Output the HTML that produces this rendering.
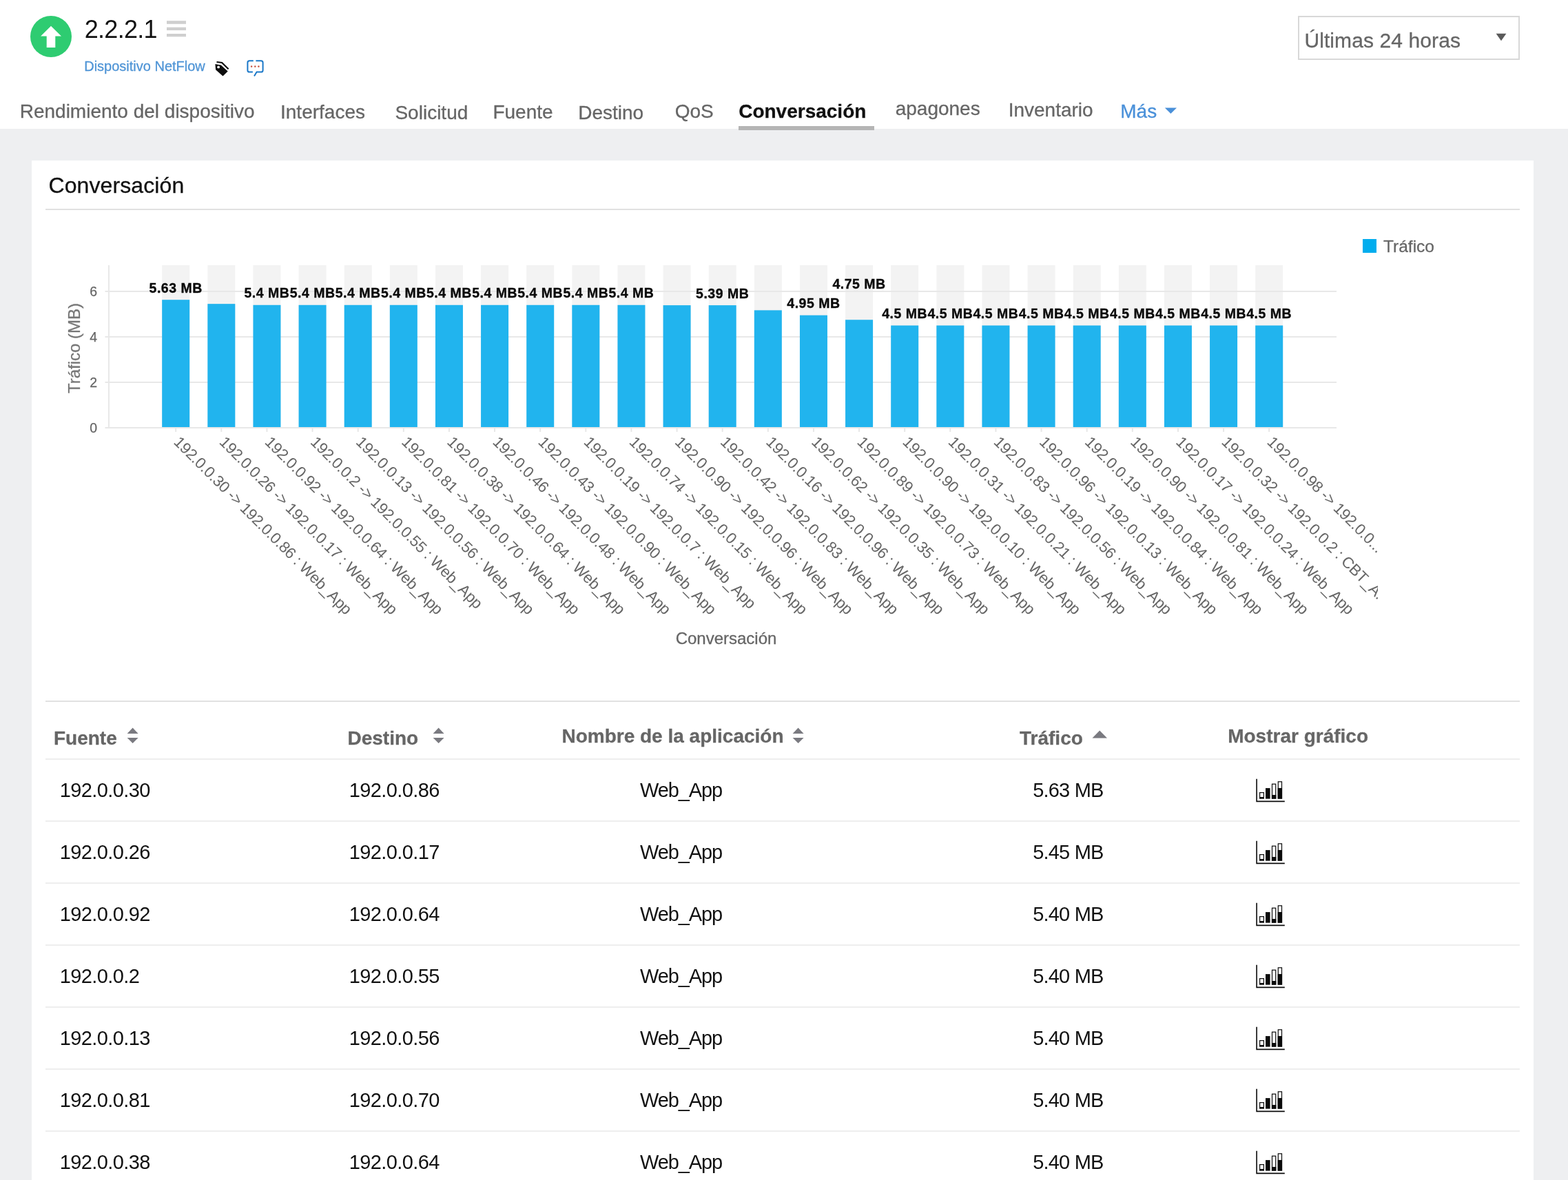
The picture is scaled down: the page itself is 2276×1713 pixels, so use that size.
<!DOCTYPE html>
<html lang="es">
<head>
<meta charset="utf-8">
<title>2.2.2.1 - Conversación</title>
<style>
html,body{margin:0;padding:0}
body{width:2276px;height:1713px;overflow:hidden;background:#eeeff1;position:relative;font-family:"Liberation Sans",Arial,Helvetica,sans-serif;-webkit-font-smoothing:antialiased}
span,div,a{white-space:nowrap}
header span,header a,.card span{-webkit-text-stroke-width:.3px}
.card span.c,header span.c{-webkit-text-stroke-width:0}
.abs,header span,header a,header div,nav a,.card span,.card div{position:absolute}
header{position:absolute;left:0;top:0;width:2276px;height:187px;background:#fff;will-change:transform}
nav{position:absolute;left:0;top:0}
nav a{text-decoration:none}
.card{position:absolute;left:46px;top:233px;width:2180px;height:1500px;background:#fff;will-change:transform}
.hr{position:absolute;left:20px;width:2140px;height:2px;background:#e1e1e1}
.rl{position:absolute;left:20px;width:2140px;height:2px;background:#eee}
svg{position:absolute;left:0;top:0;overflow:visible}
</style>
</head>
<body>

<header>
<svg width="2276" height="187" viewBox="0 0 2276 187">
<circle cx="74" cy="53" r="30" fill="#2ecc71"/>
<path d="M74 37.8 L89 52.6 L80.3 52.6 L80.3 69 L67.7 69 L67.7 52.6 L59.1 52.6 Z" fill="#fff"/>
<rect x="242" y="30.2" width="28" height="4.6" fill="#cfcfcf"/>
<rect x="242" y="39.6" width="28" height="4.4" fill="#cfcfcf"/>
<rect x="242" y="49.0" width="28" height="4.3" fill="#cfcfcf"/>
<path d="M312.4 93.1 L320.8 94.4 L330.7 103.5 L323.5 110.5 L313.1 101.2 Z" fill="#0d0d0d"/>
<circle cx="317.1" cy="97.4" r="1.9" fill="#fff"/>
<path d="M314.5 90 L322.2 91 L331.6 100.2" fill="none" stroke="#0d0d0d" stroke-width="2.2" stroke-linejoin="miter"/>
<g fill="none" stroke="#1b78c8" stroke-width="2" stroke-linecap="butt">
<path d="M367.8 88.3 H362.1 a2.7 2.7 0 0 0 -2.7 2.7 V101.9 a2.7 2.7 0 0 0 2.7 2.7 H366.9"/>
<path d="M371.4 88.3 H378.9 a2.7 2.7 0 0 1 2.7 2.7 V101.9 a2.7 2.7 0 0 1 -2.7 2.7 H372.6 L369 110.6"/>
</g>
<circle cx="365.1" cy="96.5" r="1.2" fill="#c8503c"/>
<circle cx="370.3" cy="96.5" r="1.2" fill="#c8503c"/>
<circle cx="375.4" cy="96.5" r="1.2" fill="#c8503c"/>
<path d="M2171.6 48.8 H2186.4 L2179 59.2 Z" fill="#5a5a5a"/>
<path d="M1690.8 156.4 H1708 L1699.4 164.9 Z" fill="#4a90d9"/>
</svg>
<span class="c" style="left:122.70px;top:21.03px;font-size:36px;line-height:43px;color:#111;letter-spacing:-0.7px;">2.2.2.1</span>
<span style="left:122.20px;top:83.97px;font-size:20px;line-height:24px;color:#5095d6;">Dispositivo NetFlow</span>
<div style="left:1884px;top:23px;width:321.5px;height:63.5px;box-sizing:border-box;border:2px solid #d8d8d8"></div>
<span style="left:1893.40px;top:41.30px;font-size:30px;line-height:36px;color:#666;letter-spacing:0.1px;">Últimas 24 horas</span>
<nav>
<a style="left:28.70px;top:144.80px;font-size:28px;line-height:34px;color:#666;">Rendimiento del dispositivo</a>
<a style="left:407.00px;top:145.50px;font-size:28px;line-height:34px;color:#666;">Interfaces</a>
<a style="left:573.45px;top:146.80px;font-size:28px;line-height:34px;color:#666;">Solicitud</a>
<a style="left:715.45px;top:145.80px;font-size:28px;line-height:34px;color:#666;">Fuente</a>
<a style="left:839.20px;top:146.80px;font-size:28px;line-height:34px;color:#666;">Destino</a>
<a style="left:979.70px;top:144.80px;font-size:28px;line-height:34px;color:#666;">QoS</a>
<a style="left:1072.20px;top:144.55px;font-size:28px;line-height:34px;color:#111;font-weight:700;">Conversación</a>
<a style="left:1299.70px;top:141.30px;font-size:28px;line-height:34px;color:#666;">apagones</a>
<a style="left:1463.70px;top:142.80px;font-size:28px;line-height:34px;color:#666;">Inventario</a>
<a style="left:1626.30px;top:145.30px;font-size:28px;line-height:34px;color:#4a90d9;">Más</a>
</nav>
<div style="left:1072px;top:183px;width:197px;height:5.5px;background:#b5b5b5"></div>
</header>
<main class="card">
<span style="left:24.45px;top:17.41px;font-size:32px;line-height:38px;color:#111;letter-spacing:0.1px;">Conversación</span>
<div class="hr" style="top:70px"></div>
<svg width="2180" height="780" viewBox="46 233 2180 780" font-family="'Liberation Sans',Arial,sans-serif">
<defs><clipPath id="lc"><rect x="46" y="600" width="1954" height="330"/></clipPath></defs>
<rect x="235.20" y="385.0" width="40.0" height="236.0" fill="#f3f3f3"/>
<rect x="301.32" y="385.0" width="40.0" height="236.0" fill="#f3f3f3"/>
<rect x="367.45" y="385.0" width="40.0" height="236.0" fill="#f3f3f3"/>
<rect x="433.57" y="385.0" width="40.0" height="236.0" fill="#f3f3f3"/>
<rect x="499.70" y="385.0" width="40.0" height="236.0" fill="#f3f3f3"/>
<rect x="565.83" y="385.0" width="40.0" height="236.0" fill="#f3f3f3"/>
<rect x="631.95" y="385.0" width="40.0" height="236.0" fill="#f3f3f3"/>
<rect x="698.08" y="385.0" width="40.0" height="236.0" fill="#f3f3f3"/>
<rect x="764.20" y="385.0" width="40.0" height="236.0" fill="#f3f3f3"/>
<rect x="830.33" y="385.0" width="40.0" height="236.0" fill="#f3f3f3"/>
<rect x="896.45" y="385.0" width="40.0" height="236.0" fill="#f3f3f3"/>
<rect x="962.58" y="385.0" width="40.0" height="236.0" fill="#f3f3f3"/>
<rect x="1028.70" y="385.0" width="40.0" height="236.0" fill="#f3f3f3"/>
<rect x="1094.83" y="385.0" width="40.0" height="236.0" fill="#f3f3f3"/>
<rect x="1160.95" y="385.0" width="40.0" height="236.0" fill="#f3f3f3"/>
<rect x="1227.08" y="385.0" width="40.0" height="236.0" fill="#f3f3f3"/>
<rect x="1293.20" y="385.0" width="40.0" height="236.0" fill="#f3f3f3"/>
<rect x="1359.33" y="385.0" width="40.0" height="236.0" fill="#f3f3f3"/>
<rect x="1425.45" y="385.0" width="40.0" height="236.0" fill="#f3f3f3"/>
<rect x="1491.58" y="385.0" width="40.0" height="236.0" fill="#f3f3f3"/>
<rect x="1557.70" y="385.0" width="40.0" height="236.0" fill="#f3f3f3"/>
<rect x="1623.83" y="385.0" width="40.0" height="236.0" fill="#f3f3f3"/>
<rect x="1689.95" y="385.0" width="40.0" height="236.0" fill="#f3f3f3"/>
<rect x="1756.08" y="385.0" width="40.0" height="236.0" fill="#f3f3f3"/>
<rect x="1822.20" y="385.0" width="40.0" height="236.0" fill="#f3f3f3"/>
<rect x="152.5" y="620.00" width="1787.5" height="2" fill="#e8e8e8"/>
<rect x="152.5" y="554.00" width="1787.5" height="2" fill="#e8e8e8"/>
<rect x="152.5" y="488.00" width="1787.5" height="2" fill="#e8e8e8"/>
<rect x="152.5" y="422.00" width="1787.5" height="2" fill="#e8e8e8"/>
<rect x="157.0" y="385.0" width="2" height="237.0" fill="#e8e8e8"/>
<rect x="235.20" y="435.21" width="40.0" height="184.79" fill="#21b4ee"/>
<rect x="254.20" y="622.0" width="2" height="5" fill="#e8e8e8"/>
<rect x="301.32" y="441.15" width="40.0" height="178.85" fill="#21b4ee"/>
<rect x="320.32" y="622.0" width="2" height="5" fill="#e8e8e8"/>
<rect x="367.45" y="442.80" width="40.0" height="177.20" fill="#21b4ee"/>
<rect x="386.45" y="622.0" width="2" height="5" fill="#e8e8e8"/>
<rect x="433.57" y="442.80" width="40.0" height="177.20" fill="#21b4ee"/>
<rect x="452.57" y="622.0" width="2" height="5" fill="#e8e8e8"/>
<rect x="499.70" y="442.80" width="40.0" height="177.20" fill="#21b4ee"/>
<rect x="518.70" y="622.0" width="2" height="5" fill="#e8e8e8"/>
<rect x="565.83" y="442.80" width="40.0" height="177.20" fill="#21b4ee"/>
<rect x="584.83" y="622.0" width="2" height="5" fill="#e8e8e8"/>
<rect x="631.95" y="442.80" width="40.0" height="177.20" fill="#21b4ee"/>
<rect x="650.95" y="622.0" width="2" height="5" fill="#e8e8e8"/>
<rect x="698.08" y="442.80" width="40.0" height="177.20" fill="#21b4ee"/>
<rect x="717.08" y="622.0" width="2" height="5" fill="#e8e8e8"/>
<rect x="764.20" y="442.80" width="40.0" height="177.20" fill="#21b4ee"/>
<rect x="783.20" y="622.0" width="2" height="5" fill="#e8e8e8"/>
<rect x="830.33" y="442.80" width="40.0" height="177.20" fill="#21b4ee"/>
<rect x="849.33" y="622.0" width="2" height="5" fill="#e8e8e8"/>
<rect x="896.45" y="442.80" width="40.0" height="177.20" fill="#21b4ee"/>
<rect x="915.45" y="622.0" width="2" height="5" fill="#e8e8e8"/>
<rect x="962.58" y="443.13" width="40.0" height="176.87" fill="#21b4ee"/>
<rect x="981.58" y="622.0" width="2" height="5" fill="#e8e8e8"/>
<rect x="1028.70" y="443.13" width="40.0" height="176.87" fill="#21b4ee"/>
<rect x="1047.70" y="622.0" width="2" height="5" fill="#e8e8e8"/>
<rect x="1094.83" y="450.39" width="40.0" height="169.61" fill="#21b4ee"/>
<rect x="1113.83" y="622.0" width="2" height="5" fill="#e8e8e8"/>
<rect x="1160.95" y="457.65" width="40.0" height="162.35" fill="#21b4ee"/>
<rect x="1179.95" y="622.0" width="2" height="5" fill="#e8e8e8"/>
<rect x="1227.08" y="464.25" width="40.0" height="155.75" fill="#21b4ee"/>
<rect x="1246.08" y="622.0" width="2" height="5" fill="#e8e8e8"/>
<rect x="1293.20" y="472.50" width="40.0" height="147.50" fill="#21b4ee"/>
<rect x="1312.20" y="622.0" width="2" height="5" fill="#e8e8e8"/>
<rect x="1359.33" y="472.50" width="40.0" height="147.50" fill="#21b4ee"/>
<rect x="1378.33" y="622.0" width="2" height="5" fill="#e8e8e8"/>
<rect x="1425.45" y="472.50" width="40.0" height="147.50" fill="#21b4ee"/>
<rect x="1444.45" y="622.0" width="2" height="5" fill="#e8e8e8"/>
<rect x="1491.58" y="472.50" width="40.0" height="147.50" fill="#21b4ee"/>
<rect x="1510.58" y="622.0" width="2" height="5" fill="#e8e8e8"/>
<rect x="1557.70" y="472.50" width="40.0" height="147.50" fill="#21b4ee"/>
<rect x="1576.70" y="622.0" width="2" height="5" fill="#e8e8e8"/>
<rect x="1623.83" y="472.50" width="40.0" height="147.50" fill="#21b4ee"/>
<rect x="1642.83" y="622.0" width="2" height="5" fill="#e8e8e8"/>
<rect x="1689.95" y="472.50" width="40.0" height="147.50" fill="#21b4ee"/>
<rect x="1708.95" y="622.0" width="2" height="5" fill="#e8e8e8"/>
<rect x="1756.08" y="472.50" width="40.0" height="147.50" fill="#21b4ee"/>
<rect x="1775.08" y="622.0" width="2" height="5" fill="#e8e8e8"/>
<rect x="1822.20" y="472.50" width="40.0" height="147.50" fill="#21b4ee"/>
<rect x="1841.20" y="622.0" width="2" height="5" fill="#e8e8e8"/>
<text x="141.2" y="627.90" text-anchor="end" font-size="19.5" fill="#666" stroke="#666" stroke-width="0.25">0</text>
<text x="141.2" y="561.90" text-anchor="end" font-size="19.5" fill="#666" stroke="#666" stroke-width="0.25">2</text>
<text x="141.2" y="495.90" text-anchor="end" font-size="19.5" fill="#666" stroke="#666" stroke-width="0.25">4</text>
<text x="141.2" y="429.90" text-anchor="end" font-size="19.5" fill="#666" stroke="#666" stroke-width="0.25">6</text>
<text transform="translate(116.3,505.5) rotate(-90)" text-anchor="middle" font-size="24" fill="#777" stroke="#777" stroke-width="0.3">Tráfico (MB)</text>
<text x="1054" y="934.5" text-anchor="middle" font-size="24" fill="#666" stroke="#666" stroke-width="0.3">Conversación</text>
<rect x="1978" y="347" width="20" height="20" fill="#00adee"/>
<text x="2008" y="365.8" font-size="24.5" fill="#666" stroke="#666" stroke-width="0.3">Tráfico</text>
<text x="255.20" y="424.80" text-anchor="middle" font-size="19.5" font-weight="700" letter-spacing="0.5" fill="#0a0a0a" stroke="#0a0a0a" stroke-width="0.35">5.63 MB</text>
<text x="1048.70" y="432.53" text-anchor="middle" font-size="19.5" font-weight="700" letter-spacing="0.5" fill="#0a0a0a" stroke="#0a0a0a" stroke-width="0.35">5.39 MB</text>
<text x="1180.95" y="447.05" text-anchor="middle" font-size="19.5" font-weight="700" letter-spacing="0.5" fill="#0a0a0a" stroke="#0a0a0a" stroke-width="0.35">4.95 MB</text>
<text x="1247.08" y="419.25" text-anchor="middle" font-size="19.5" font-weight="700" letter-spacing="0.5" fill="#0a0a0a" stroke="#0a0a0a" stroke-width="0.35">4.75 MB</text>
<text x="387.45" y="432.20" text-anchor="middle" font-size="19.5" font-weight="700" letter-spacing="0.5" fill="#0a0a0a" stroke="#0a0a0a" stroke-width="0.35">5.4 MB</text>
<text x="453.57" y="432.20" text-anchor="middle" font-size="19.5" font-weight="700" letter-spacing="0.5" fill="#0a0a0a" stroke="#0a0a0a" stroke-width="0.35">5.4 MB</text>
<text x="519.70" y="432.20" text-anchor="middle" font-size="19.5" font-weight="700" letter-spacing="0.5" fill="#0a0a0a" stroke="#0a0a0a" stroke-width="0.35">5.4 MB</text>
<text x="585.83" y="432.20" text-anchor="middle" font-size="19.5" font-weight="700" letter-spacing="0.5" fill="#0a0a0a" stroke="#0a0a0a" stroke-width="0.35">5.4 MB</text>
<text x="651.95" y="432.20" text-anchor="middle" font-size="19.5" font-weight="700" letter-spacing="0.5" fill="#0a0a0a" stroke="#0a0a0a" stroke-width="0.35">5.4 MB</text>
<text x="718.08" y="432.20" text-anchor="middle" font-size="19.5" font-weight="700" letter-spacing="0.5" fill="#0a0a0a" stroke="#0a0a0a" stroke-width="0.35">5.4 MB</text>
<text x="784.20" y="432.20" text-anchor="middle" font-size="19.5" font-weight="700" letter-spacing="0.5" fill="#0a0a0a" stroke="#0a0a0a" stroke-width="0.35">5.4 MB</text>
<text x="850.33" y="432.20" text-anchor="middle" font-size="19.5" font-weight="700" letter-spacing="0.5" fill="#0a0a0a" stroke="#0a0a0a" stroke-width="0.35">5.4 MB</text>
<text x="916.45" y="432.20" text-anchor="middle" font-size="19.5" font-weight="700" letter-spacing="0.5" fill="#0a0a0a" stroke="#0a0a0a" stroke-width="0.35">5.4 MB</text>
<text x="1313.20" y="461.90" text-anchor="middle" font-size="19.5" font-weight="700" letter-spacing="0.5" fill="#0a0a0a" stroke="#0a0a0a" stroke-width="0.35">4.5 MB</text>
<text x="1379.33" y="461.90" text-anchor="middle" font-size="19.5" font-weight="700" letter-spacing="0.5" fill="#0a0a0a" stroke="#0a0a0a" stroke-width="0.35">4.5 MB</text>
<text x="1445.45" y="461.90" text-anchor="middle" font-size="19.5" font-weight="700" letter-spacing="0.5" fill="#0a0a0a" stroke="#0a0a0a" stroke-width="0.35">4.5 MB</text>
<text x="1511.58" y="461.90" text-anchor="middle" font-size="19.5" font-weight="700" letter-spacing="0.5" fill="#0a0a0a" stroke="#0a0a0a" stroke-width="0.35">4.5 MB</text>
<text x="1577.70" y="461.90" text-anchor="middle" font-size="19.5" font-weight="700" letter-spacing="0.5" fill="#0a0a0a" stroke="#0a0a0a" stroke-width="0.35">4.5 MB</text>
<text x="1643.83" y="461.90" text-anchor="middle" font-size="19.5" font-weight="700" letter-spacing="0.5" fill="#0a0a0a" stroke="#0a0a0a" stroke-width="0.35">4.5 MB</text>
<text x="1709.95" y="461.90" text-anchor="middle" font-size="19.5" font-weight="700" letter-spacing="0.5" fill="#0a0a0a" stroke="#0a0a0a" stroke-width="0.35">4.5 MB</text>
<text x="1776.08" y="461.90" text-anchor="middle" font-size="19.5" font-weight="700" letter-spacing="0.5" fill="#0a0a0a" stroke="#0a0a0a" stroke-width="0.35">4.5 MB</text>
<text x="1842.20" y="461.90" text-anchor="middle" font-size="19.5" font-weight="700" letter-spacing="0.5" fill="#0a0a0a" stroke="#0a0a0a" stroke-width="0.35">4.5 MB</text>
<g clip-path="url(#lc)" font-size="22.5" fill="#666" letter-spacing="-0.26">
<text transform="translate(251.10,643.10) rotate(45)">192.0.0.30 -&gt; 192.0.0.86 : Web_App</text>
<text transform="translate(317.22,643.10) rotate(45)">192.0.0.26 -&gt; 192.0.0.17 : Web_App</text>
<text transform="translate(383.35,643.10) rotate(45)">192.0.0.92 -&gt; 192.0.0.64 : Web_App</text>
<text transform="translate(449.47,643.10) rotate(45)">192.0.0.2 -&gt; 192.0.0.55 : Web_App</text>
<text transform="translate(515.60,643.10) rotate(45)">192.0.0.13 -&gt; 192.0.0.56 : Web_App</text>
<text transform="translate(581.73,643.10) rotate(45)">192.0.0.81 -&gt; 192.0.0.70 : Web_App</text>
<text transform="translate(647.85,643.10) rotate(45)">192.0.0.38 -&gt; 192.0.0.64 : Web_App</text>
<text transform="translate(713.98,643.10) rotate(45)">192.0.0.46 -&gt; 192.0.0.48 : Web_App</text>
<text transform="translate(780.10,643.10) rotate(45)">192.0.0.43 -&gt; 192.0.0.90 : Web_App</text>
<text transform="translate(846.23,643.10) rotate(45)">192.0.0.19 -&gt; 192.0.0.7 : Web_App</text>
<text transform="translate(912.35,643.10) rotate(45)">192.0.0.74 -&gt; 192.0.0.15 : Web_App</text>
<text transform="translate(978.48,643.10) rotate(45)">192.0.0.90 -&gt; 192.0.0.96 : Web_App</text>
<text transform="translate(1044.60,643.10) rotate(45)">192.0.0.42 -&gt; 192.0.0.83 : Web_App</text>
<text transform="translate(1110.73,643.10) rotate(45)">192.0.0.16 -&gt; 192.0.0.96 : Web_App</text>
<text transform="translate(1176.85,643.10) rotate(45)">192.0.0.62 -&gt; 192.0.0.35 : Web_App</text>
<text transform="translate(1242.98,643.10) rotate(45)">192.0.0.89 -&gt; 192.0.0.73 : Web_App</text>
<text transform="translate(1309.10,643.10) rotate(45)">192.0.0.90 -&gt; 192.0.0.10 : Web_App</text>
<text transform="translate(1375.23,643.10) rotate(45)">192.0.0.31 -&gt; 192.0.0.21 : Web_App</text>
<text transform="translate(1441.35,643.10) rotate(45)">192.0.0.83 -&gt; 192.0.0.56 : Web_App</text>
<text transform="translate(1507.48,643.10) rotate(45)">192.0.0.96 -&gt; 192.0.0.13 : Web_App</text>
<text transform="translate(1573.60,643.10) rotate(45)">192.0.0.19 -&gt; 192.0.0.84 : Web_App</text>
<text transform="translate(1639.73,643.10) rotate(45)">192.0.0.90 -&gt; 192.0.0.81 : Web_App</text>
<text transform="translate(1705.85,643.10) rotate(45)">192.0.0.17 -&gt; 192.0.0.24 : Web_App</text>
<text transform="translate(1771.98,643.10) rotate(45)">192.0.0.32 -&gt; 192.0.0.2 : CBT_A...</text>
<text transform="translate(1838.10,643.10) rotate(45)">192.0.0.98 -&gt; 192.0.0...</text>
</g>
</svg>
<div class="hr" style="top:784px"></div>
<span style="left:31.95px;top:822.00px;font-size:28px;line-height:34px;color:#666;font-weight:700;">Fuente</span>
<svg width="18" height="24" viewBox="0 0 18 24" style="left:137.80px;top:822.7px"><path d="M8.6 0.4 L16.6 9 H0.6 Z M0.6 15 H16.6 L8.6 23 Z" fill="#7a7a80"/></svg>
<span style="left:458.45px;top:822.00px;font-size:28px;line-height:34px;color:#666;font-weight:700;">Destino</span>
<svg width="18" height="24" viewBox="0 0 18 24" style="left:582.30px;top:822.7px"><path d="M8.6 0.4 L16.6 9 H0.6 Z M0.6 15 H16.6 L8.6 23 Z" fill="#7a7a80"/></svg>
<span style="left:769.45px;top:819.10px;font-size:28px;line-height:34px;color:#666;font-weight:700;">Nombre de la aplicación</span>
<svg width="18" height="24" viewBox="0 0 18 24" style="left:1103.80px;top:822.7px"><path d="M8.6 0.4 L16.6 9 H0.6 Z M0.6 15 H16.6 L8.6 23 Z" fill="#7a7a80"/></svg>
<span style="left:1434.00px;top:822.05px;font-size:28px;line-height:34px;color:#666;font-weight:700;">Tráfico</span>
<svg width="24" height="12" viewBox="0 0 24 12" style="left:1539px;top:827px"><path d="M11.2 0.5 L22 11.5 H0.5 Z" fill="#7a7a80"/></svg>
<span style="left:1736.20px;top:819.10px;font-size:28px;line-height:34px;color:#666;font-weight:700;">Mostrar gráfico</span>
<div class="rl" style="top:868px"></div>
<span class="c" style="left:40.70px;top:896.95px;font-size:29px;line-height:35px;color:#111;letter-spacing:-0.6px;">192.0.0.30</span>
<span class="c" style="left:460.70px;top:896.95px;font-size:29px;line-height:35px;color:#111;letter-spacing:-0.6px;">192.0.0.86</span>
<span class="c" style="left:882.95px;top:896.95px;font-size:29px;line-height:35px;color:#111;letter-spacing:-1.1px;">Web_App</span>
<span class="c" style="left:1453.20px;top:896.95px;font-size:29px;line-height:35px;color:#111;letter-spacing:-0.8px;">5.63 MB</span>
<svg width="44" height="36" viewBox="1822 1130 44 36" style="left:1776px;top:897px"><path d="M1823.3 1130.8 H1824.9 V1162.6 H1864.8 V1164.2 H1823.3 Z" fill="#0b0b0b"/><rect x="1828.6" y="1150.6" width="5.8" height="8" fill="#fff" stroke="#0b0b0b" stroke-width="1.2"/><rect x="1828" y="1157" width="7" height="2.6" fill="#0b0b0b"/><rect x="1837" y="1144.1" width="6.6" height="15.5" fill="#0b0b0b"/><rect x="1846.5" y="1138.2" width="5.2" height="20.8" fill="#fff" stroke="#0b0b0b" stroke-width="1.2"/><rect x="1845.9" y="1154" width="6.4" height="5.6" fill="#0b0b0b"/><rect x="1855.3" y="1134.8" width="5.2" height="24.2" fill="#fff" stroke="#0b0b0b" stroke-width="1.2"/><rect x="1854.7" y="1144" width="6.4" height="15.6" fill="#0b0b0b"/></svg>
<div class="rl" style="top:958px"></div>
<span class="c" style="left:40.70px;top:986.95px;font-size:29px;line-height:35px;color:#111;letter-spacing:-0.6px;">192.0.0.26</span>
<span class="c" style="left:460.70px;top:986.95px;font-size:29px;line-height:35px;color:#111;letter-spacing:-0.6px;">192.0.0.17</span>
<span class="c" style="left:882.95px;top:986.95px;font-size:29px;line-height:35px;color:#111;letter-spacing:-1.1px;">Web_App</span>
<span class="c" style="left:1453.20px;top:986.95px;font-size:29px;line-height:35px;color:#111;letter-spacing:-0.8px;">5.45 MB</span>
<svg width="44" height="36" viewBox="1822 1130 44 36" style="left:1776px;top:987px"><path d="M1823.3 1130.8 H1824.9 V1162.6 H1864.8 V1164.2 H1823.3 Z" fill="#0b0b0b"/><rect x="1828.6" y="1150.6" width="5.8" height="8" fill="#fff" stroke="#0b0b0b" stroke-width="1.2"/><rect x="1828" y="1157" width="7" height="2.6" fill="#0b0b0b"/><rect x="1837" y="1144.1" width="6.6" height="15.5" fill="#0b0b0b"/><rect x="1846.5" y="1138.2" width="5.2" height="20.8" fill="#fff" stroke="#0b0b0b" stroke-width="1.2"/><rect x="1845.9" y="1154" width="6.4" height="5.6" fill="#0b0b0b"/><rect x="1855.3" y="1134.8" width="5.2" height="24.2" fill="#fff" stroke="#0b0b0b" stroke-width="1.2"/><rect x="1854.7" y="1144" width="6.4" height="15.6" fill="#0b0b0b"/></svg>
<div class="rl" style="top:1048px"></div>
<span class="c" style="left:40.70px;top:1076.95px;font-size:29px;line-height:35px;color:#111;letter-spacing:-0.6px;">192.0.0.92</span>
<span class="c" style="left:460.70px;top:1076.95px;font-size:29px;line-height:35px;color:#111;letter-spacing:-0.6px;">192.0.0.64</span>
<span class="c" style="left:882.95px;top:1076.95px;font-size:29px;line-height:35px;color:#111;letter-spacing:-1.1px;">Web_App</span>
<span class="c" style="left:1453.20px;top:1076.95px;font-size:29px;line-height:35px;color:#111;letter-spacing:-0.8px;">5.40 MB</span>
<svg width="44" height="36" viewBox="1822 1130 44 36" style="left:1776px;top:1077px"><path d="M1823.3 1130.8 H1824.9 V1162.6 H1864.8 V1164.2 H1823.3 Z" fill="#0b0b0b"/><rect x="1828.6" y="1150.6" width="5.8" height="8" fill="#fff" stroke="#0b0b0b" stroke-width="1.2"/><rect x="1828" y="1157" width="7" height="2.6" fill="#0b0b0b"/><rect x="1837" y="1144.1" width="6.6" height="15.5" fill="#0b0b0b"/><rect x="1846.5" y="1138.2" width="5.2" height="20.8" fill="#fff" stroke="#0b0b0b" stroke-width="1.2"/><rect x="1845.9" y="1154" width="6.4" height="5.6" fill="#0b0b0b"/><rect x="1855.3" y="1134.8" width="5.2" height="24.2" fill="#fff" stroke="#0b0b0b" stroke-width="1.2"/><rect x="1854.7" y="1144" width="6.4" height="15.6" fill="#0b0b0b"/></svg>
<div class="rl" style="top:1138px"></div>
<span class="c" style="left:40.70px;top:1166.95px;font-size:29px;line-height:35px;color:#111;letter-spacing:-0.6px;">192.0.0.2</span>
<span class="c" style="left:460.70px;top:1166.95px;font-size:29px;line-height:35px;color:#111;letter-spacing:-0.6px;">192.0.0.55</span>
<span class="c" style="left:882.95px;top:1166.95px;font-size:29px;line-height:35px;color:#111;letter-spacing:-1.1px;">Web_App</span>
<span class="c" style="left:1453.20px;top:1166.95px;font-size:29px;line-height:35px;color:#111;letter-spacing:-0.8px;">5.40 MB</span>
<svg width="44" height="36" viewBox="1822 1130 44 36" style="left:1776px;top:1167px"><path d="M1823.3 1130.8 H1824.9 V1162.6 H1864.8 V1164.2 H1823.3 Z" fill="#0b0b0b"/><rect x="1828.6" y="1150.6" width="5.8" height="8" fill="#fff" stroke="#0b0b0b" stroke-width="1.2"/><rect x="1828" y="1157" width="7" height="2.6" fill="#0b0b0b"/><rect x="1837" y="1144.1" width="6.6" height="15.5" fill="#0b0b0b"/><rect x="1846.5" y="1138.2" width="5.2" height="20.8" fill="#fff" stroke="#0b0b0b" stroke-width="1.2"/><rect x="1845.9" y="1154" width="6.4" height="5.6" fill="#0b0b0b"/><rect x="1855.3" y="1134.8" width="5.2" height="24.2" fill="#fff" stroke="#0b0b0b" stroke-width="1.2"/><rect x="1854.7" y="1144" width="6.4" height="15.6" fill="#0b0b0b"/></svg>
<div class="rl" style="top:1228px"></div>
<span class="c" style="left:40.70px;top:1256.95px;font-size:29px;line-height:35px;color:#111;letter-spacing:-0.6px;">192.0.0.13</span>
<span class="c" style="left:460.70px;top:1256.95px;font-size:29px;line-height:35px;color:#111;letter-spacing:-0.6px;">192.0.0.56</span>
<span class="c" style="left:882.95px;top:1256.95px;font-size:29px;line-height:35px;color:#111;letter-spacing:-1.1px;">Web_App</span>
<span class="c" style="left:1453.20px;top:1256.95px;font-size:29px;line-height:35px;color:#111;letter-spacing:-0.8px;">5.40 MB</span>
<svg width="44" height="36" viewBox="1822 1130 44 36" style="left:1776px;top:1257px"><path d="M1823.3 1130.8 H1824.9 V1162.6 H1864.8 V1164.2 H1823.3 Z" fill="#0b0b0b"/><rect x="1828.6" y="1150.6" width="5.8" height="8" fill="#fff" stroke="#0b0b0b" stroke-width="1.2"/><rect x="1828" y="1157" width="7" height="2.6" fill="#0b0b0b"/><rect x="1837" y="1144.1" width="6.6" height="15.5" fill="#0b0b0b"/><rect x="1846.5" y="1138.2" width="5.2" height="20.8" fill="#fff" stroke="#0b0b0b" stroke-width="1.2"/><rect x="1845.9" y="1154" width="6.4" height="5.6" fill="#0b0b0b"/><rect x="1855.3" y="1134.8" width="5.2" height="24.2" fill="#fff" stroke="#0b0b0b" stroke-width="1.2"/><rect x="1854.7" y="1144" width="6.4" height="15.6" fill="#0b0b0b"/></svg>
<div class="rl" style="top:1318px"></div>
<span class="c" style="left:40.70px;top:1346.95px;font-size:29px;line-height:35px;color:#111;letter-spacing:-0.6px;">192.0.0.81</span>
<span class="c" style="left:460.70px;top:1346.95px;font-size:29px;line-height:35px;color:#111;letter-spacing:-0.6px;">192.0.0.70</span>
<span class="c" style="left:882.95px;top:1346.95px;font-size:29px;line-height:35px;color:#111;letter-spacing:-1.1px;">Web_App</span>
<span class="c" style="left:1453.20px;top:1346.95px;font-size:29px;line-height:35px;color:#111;letter-spacing:-0.8px;">5.40 MB</span>
<svg width="44" height="36" viewBox="1822 1130 44 36" style="left:1776px;top:1347px"><path d="M1823.3 1130.8 H1824.9 V1162.6 H1864.8 V1164.2 H1823.3 Z" fill="#0b0b0b"/><rect x="1828.6" y="1150.6" width="5.8" height="8" fill="#fff" stroke="#0b0b0b" stroke-width="1.2"/><rect x="1828" y="1157" width="7" height="2.6" fill="#0b0b0b"/><rect x="1837" y="1144.1" width="6.6" height="15.5" fill="#0b0b0b"/><rect x="1846.5" y="1138.2" width="5.2" height="20.8" fill="#fff" stroke="#0b0b0b" stroke-width="1.2"/><rect x="1845.9" y="1154" width="6.4" height="5.6" fill="#0b0b0b"/><rect x="1855.3" y="1134.8" width="5.2" height="24.2" fill="#fff" stroke="#0b0b0b" stroke-width="1.2"/><rect x="1854.7" y="1144" width="6.4" height="15.6" fill="#0b0b0b"/></svg>
<div class="rl" style="top:1408px"></div>
<span class="c" style="left:40.70px;top:1436.95px;font-size:29px;line-height:35px;color:#111;letter-spacing:-0.6px;">192.0.0.38</span>
<span class="c" style="left:460.70px;top:1436.95px;font-size:29px;line-height:35px;color:#111;letter-spacing:-0.6px;">192.0.0.64</span>
<span class="c" style="left:882.95px;top:1436.95px;font-size:29px;line-height:35px;color:#111;letter-spacing:-1.1px;">Web_App</span>
<span class="c" style="left:1453.20px;top:1436.95px;font-size:29px;line-height:35px;color:#111;letter-spacing:-0.8px;">5.40 MB</span>
<svg width="44" height="36" viewBox="1822 1130 44 36" style="left:1776px;top:1437px"><path d="M1823.3 1130.8 H1824.9 V1162.6 H1864.8 V1164.2 H1823.3 Z" fill="#0b0b0b"/><rect x="1828.6" y="1150.6" width="5.8" height="8" fill="#fff" stroke="#0b0b0b" stroke-width="1.2"/><rect x="1828" y="1157" width="7" height="2.6" fill="#0b0b0b"/><rect x="1837" y="1144.1" width="6.6" height="15.5" fill="#0b0b0b"/><rect x="1846.5" y="1138.2" width="5.2" height="20.8" fill="#fff" stroke="#0b0b0b" stroke-width="1.2"/><rect x="1845.9" y="1154" width="6.4" height="5.6" fill="#0b0b0b"/><rect x="1855.3" y="1134.8" width="5.2" height="24.2" fill="#fff" stroke="#0b0b0b" stroke-width="1.2"/><rect x="1854.7" y="1144" width="6.4" height="15.6" fill="#0b0b0b"/></svg>
<div class="rl" style="top:1498px"></div>
</main>
</body>
</html>
